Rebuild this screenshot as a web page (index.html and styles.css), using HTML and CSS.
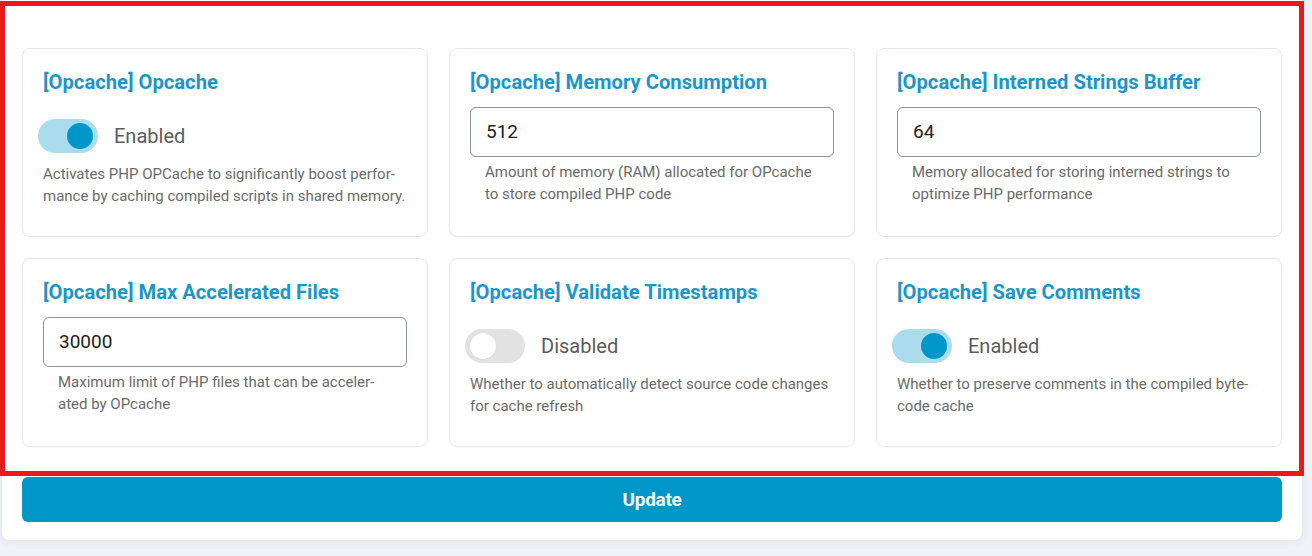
FILE: index.html
```html
<!DOCTYPE html>
<html lang="en">
<head>
<meta charset="utf-8">
<title>Opcache settings</title>
<link rel="stylesheet" href="styles.css">
</head>
<body>
<div class="panel">
  <div class="grid">
    <div class="card">
      <h3 class="card-title">[Opcache] Opcache</h3>
      <div class="switch-row">
        <span class="switch on"><span class="knob"></span></span>
        <span class="switch-label">Enabled</span>
      </div>
      <p class="desc">Activates PHP OPCache to significantly boost perfor&shy;mance by caching compiled scripts in shared memory.</p>
    </div>
    <div class="card">
      <h3 class="card-title">[Opcache] Memory Consumption</h3>
      <input class="field" type="text" value="512">
      <p class="desc indent">Amount of memory (RAM) allocated for OPcache to store compiled PHP code</p>
    </div>
    <div class="card">
      <h3 class="card-title">[Opcache] Interned Strings Buffer</h3>
      <input class="field" type="text" value="64">
      <p class="desc indent">Memory allocated for storing interned strings to optimize PHP performance</p>
    </div>
    <div class="card">
      <h3 class="card-title">[Opcache] Max Accelerated Files</h3>
      <input class="field" type="text" value="30000">
      <p class="desc indent">Maximum limit of PHP files that can be acceler&shy;ated by OPcache</p>
    </div>
    <div class="card">
      <h3 class="card-title">[Opcache] Validate Timestamps</h3>
      <div class="switch-row">
        <span class="switch off"><span class="knob"></span></span>
        <span class="switch-label">Disabled</span>
      </div>
      <p class="desc">Whether to automatically detect source code changes for cache refresh</p>
    </div>
    <div class="card">
      <h3 class="card-title">[Opcache] Save Comments</h3>
      <div class="switch-row">
        <span class="switch on"><span class="knob"></span></span>
        <span class="switch-label">Enabled</span>
      </div>
      <p class="desc">Whether to preserve comments in the compiled byte-code cache</p>
    </div>
  </div>
  <button class="update-btn" type="button">Update</button>
</div>
<div class="highlight"></div>
</body>
</html>
```

FILE: styles.css
```css
* {
  box-sizing: border-box;
}

html, body {
  margin: 0;
  padding: 0;
}

body {
  background: #eff2f7;
  font-family: Roboto, "Liberation Sans", Arial, sans-serif;
  width: 1312px;
  height: 556px;
  overflow: hidden;
  position: relative;
}

.panel {
  width: 1300px;
  margin: -12px 0 0 2px;
  padding: 60px 20px 18px 20px;
  background: #ffffff;
  border-radius: 8px;
  box-shadow: 0 2px 10px rgba(20, 40, 80, 0.07);
}

.grid {
  display: grid;
  grid-template-columns: repeat(3, 1fr);
  column-gap: 21px;
  row-gap: 21px;
}

.card {
  min-height: 189px;
  border: 1px solid #e4e7eb;
  border-radius: 8px;
  padding: 21px 20px 20px 20px;
  background: #fff;
}

.card-title {
  margin: 0;
  font-size: 20.2px;
  line-height: 24px;
  font-weight: 700;
  color: #1b96cb;
}

.field {
  display: block;
  width: 100%;
  height: 50px;
  margin-top: 13px;
  border: 1px solid #8d9198;
  border-radius: 6px;
  padding: 0 15px 1px 15px;
  font-family: Roboto, "Liberation Sans", Arial, sans-serif;
  font-size: 19px;
  color: #222;
  background: #fff;
  outline: none;
}

.desc {
  margin: 4px 0 0 0;
  font-size: 15px;
  line-height: 22px;
  color: #6a6a6a;
}

.desc.indent {
  padding: 0 15px;
}

.switch-row {
  display: flex;
  align-items: center;
  gap: 16px;
  margin: 25px 0 0 -5px;
}

.switch {
  width: 60px;
  height: 34px;
  border-radius: 17px;
  display: flex;
  align-items: center;
  padding: 0 5px;
}

.switch .knob {
  width: 26px;
  height: 26px;
  border-radius: 50%;
}

.switch.on {
  background: #aadcee;
  justify-content: flex-end;
}

.switch.on .knob {
  background: #0096c9;
}

.switch.off {
  background: #e2e2e2;
  justify-content: flex-start;
}

.switch.off .knob {
  background: #ffffff;
  box-shadow: 0 0 1px rgba(0, 0, 0, 0.15);
}

.switch-label {
  font-size: 20px;
  color: #5c5c5c;
}

.switch-row + .desc {
  margin-top: 10px;
}

.update-btn {
  display: block;
  width: 100%;
  height: 45px;
  margin-top: 30px;
  border: none;
  border-radius: 6px;
  background: #0096c7;
  color: #f4fbfe;
  font-family: Roboto, "Liberation Sans", Arial, sans-serif;
  font-size: 19px;
  font-weight: 700;
  letter-spacing: -0.3px;
}

.highlight {
  position: absolute;
  left: 0;
  top: 1px;
  width: 1304px;
  height: 475px;
  border: 5px solid #ea1a1a;
  pointer-events: none;
}
```
